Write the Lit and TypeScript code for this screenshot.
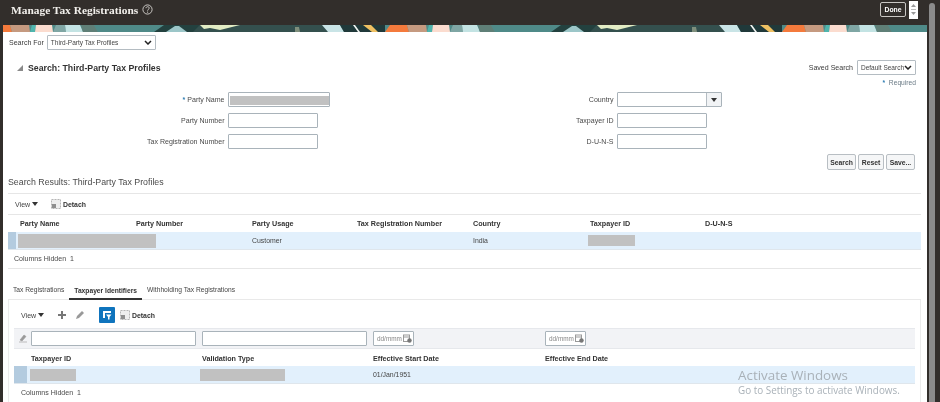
import { LitElement, html, css, svg } from "lit";
import { customElement } from "lit/decorators.js";

// one period of the banner artwork, x in px from the pattern start
const BANNER: [string, string][] = [
  ["#f47a3c", "0,7 5,0 22,0 24,7"],
  ["#c59a80", "24,7 22,0 41,0 42,7"],
  ["#4fb5ad", "42,7 44,0 48,0 47,7"],
  ["#fbdccf", "47,7 48,0 64,0 65,7"],
  ["#7fa6a4", "65,7 68,0 77,0 78,7"],
  ["#c3e3e3", "78,7 77,0 92,0 95,7"],
  ["#5f7f77", "95,7 93,0 106,0 110,7"],
  ["#4f8a88", "110,7 106,0 176,0 166,7"],
  ["#23413f", "166,7 176,0 214,0 214,7"],
  ["#9cc6c8", "178,7 187,1 191,1 199,7"],
  ["#34504e", "212,0 340,0 340,7 205,7"],
  ["#e2ecc4", "212,0 252,0 244,2 232,5 222,3 216,4"],
  ["#7f8f7c", "307,2 311,2 312,7 307,7"],
  ["#c9e4e6", "334,0 352,0 356,7 340,7"],
  ["#20393a", "352,0 397,0 397,7 356,7"],
  ["#f3f6f4", "365,0 367,0 372,7 370,7"],
  ["#efc062", "375,0 383,0 390,7 384,7"],
];

@customElement("app-root")
export class AppRoot extends LitElement {
  static styles = css`
    :host {
      display: block;
      width: 940px;
      height: 402px;
      overflow: hidden;
      font-family: "Liberation Sans", Arial, sans-serif;
      font-size: 7.05px;
      color: #3a3a3a;
    }
    .frame {
      position: relative;
      display: flex;
      height: 402px;
      background: #322e2b;
      filter: blur(0.45px);
    }
    .edge {
      width: 3px;
      flex: none;
    }
    .main {
      width: 924px;
      flex: none;
      background: #fff;
      overflow: hidden;
    }
    .rail {
      width: 13px;
      flex: none;
      padding: 3px 5px 0 2px;
      box-sizing: border-box;
    }
    .thumb {
      height: 100%;
      background: #8b8b8b;
      border-radius: 3px 3px 0 0;
    }

    .titlebar {
      box-sizing: border-box;
      height: 25px;
      background: #322e2b;
      display: flex;
      align-items: center;
      padding: 0 9px 6px 8px;
      color: #f2f0ec;
    }
    .titlebar h1 {
      margin: 0;
      font: bold 11.4px "Liberation Serif", Georgia, serif;
    }
    .help {
      margin-left: 4px;
    }
    .done {
      margin-left: auto;
      width: 26px;
      height: 15px;
      box-sizing: border-box;
      border: 1px solid #c9c7c4;
      border-radius: 2px;
      color: #fff;
      font-size: 6.8px;
      font-weight: bold;
      display: flex;
      align-items: center;
      justify-content: center;
      margin-right: 3px;
    }
    .spin {
      width: 9px;
      height: 18px;
      background: #fff;
      display: flex;
      flex-direction: column;
      align-items: center;
      justify-content: center;
      gap: 2px;
    }
    .banner {
      display: block;
      width: 924px;
      height: 7px;
    }

    .content {
      padding: 3px 6px 0 5px;
    }
    .search-for {
      height: 15px;
      display: flex;
      align-items: center;
      gap: 3px;
      padding-left: 1px;
    }
    .select {
      box-sizing: border-box;
      height: 15px;
      border: 1px solid #b4bcc2;
      border-radius: 1px;
      display: flex;
      align-items: center;
      justify-content: space-between;
      padding: 0 3px;
      color: #444;
      font-size: 6.5px;
      white-space: nowrap;
    }
    .select.for {
      width: 109px;
    }
    .select.saved {
      width: 59px;
    }
    .head-row {
      display: flex;
      align-items: center;
      justify-content: space-between;
      height: 15px;
      margin-top: 10px;
      padding: 0 5px 0 9px;
    }
    .head-row h2 {
      margin: 0 0 0 5px;
      font-size: 8.75px;
      font-weight: bold;
      color: #333;
    }
    .disclose {
      display: flex;
      align-items: center;
    }
    .saved-wrap {
      display: flex;
      align-items: center;
      gap: 4px;
    }
    .required {
      text-align: right;
      padding-right: 5px;
      height: 11px;
      margin-top: 4px;
      color: #6a7a85;
      font-size: 6.7px;
    }
    .required b,
    .star {
      color: #2a7ab0;
      font-weight: bold;
    }
    .form {
      display: grid;
      grid-template-columns: 220px 102px 287px 105px;
      row-gap: 6px;
      margin-top: 2px;
    }
    .label {
      height: 15px;
      line-height: 15px;
      text-align: right;
      padding-right: 3.5px;
      box-sizing: border-box;
      white-space: nowrap;
      color: #4a4a4a;
    }
    .input {
      box-sizing: border-box;
      height: 15px;
      width: 90px;
      border: 1px solid #a9b3ba;
      border-radius: 1px;
      background: #fff;
    }
    .input.party {
      width: 102px;
      padding: 3px 0 1px 1px;
    }
    .input.party i {
      display: block;
      height: 100%;
      background: #c1c1c1;
    }
    .input.combo {
      width: 105px;
      display: flex;
      justify-content: flex-end;
    }
    .combo span {
      width: 14px;
      border-left: 1px solid #b4bcc2;
      background: #f1f3f5;
      display: flex;
      align-items: center;
      justify-content: center;
    }
    .buttons {
      display: flex;
      justify-content: flex-end;
      gap: 2px;
      padding-right: 6px;
      margin-top: 5px;
      height: 16px;
    }
    .btn {
      box-sizing: border-box;
      height: 16px;
      border: 1px solid #b8bec3;
      border-radius: 2px;
      background: #f5f6f7;
      font-size: 6.8px;
      font-weight: bold;
      color: #333;
      display: flex;
      align-items: center;
      justify-content: center;
    }
    .results-title {
      height: 23px;
      line-height: 24px;
      font-size: 8.8px;
      color: #4a4a4a;
      border-bottom: 1px solid #e6e6e6;
    }
    .toolbar {
      height: 20px;
      display: flex;
      align-items: center;
      padding-left: 7px;
    }
    .view {
      display: flex;
      align-items: center;
      gap: 2px;
      width: 36px;
      color: #444;
    }
    .detach {
      display: flex;
      align-items: center;
      gap: 2px;
      font-size: 6.9px;
      font-weight: bold;
      color: #333;
    }
    .row {
      display: grid;
      align-items: center;
    }
    .results .row {
      grid-template-columns: 12px 116px 116px 105px 116px 117px 115px 1fr;
    }
    .hdr {
      height: 17px;
      border-top: 1px solid #e6e6e6;
      font-size: 7.2px;
      font-weight: bold;
      color: #333;
    }
    .data {
      height: 17px;
      background: #e2f0fc;
      border-bottom: 1px solid #dfe6ec;
      color: #444;
      font-size: 6.9px;
    }
    .mark {
      align-self: stretch;
      width: 8px;
      background: #b3cbdf;
    }
    .cell {
      position: relative;
      white-space: nowrap;
    }
    .redact {
      display: block;
      background: #c1c1c1;
    }
    .hidden {
      height: 18px;
      line-height: 17px;
      padding-left: 6px;
      color: #4a4a4a;
    }
    .results {
      border-bottom: 1px solid #e6e6e6;
    }
    .tabs {
      display: flex;
      height: 30px;
      align-items: flex-end;
      border-bottom: 1px solid #e9e9e9;
    }
    .tab {
      height: 17px;
      line-height: 16px;
      padding: 0 5px;
      color: #444;
      box-sizing: border-box;
      font-size: 6.7px;
    }
    .tab.on {
      font-weight: bold;
      color: #333;
      border-bottom: 2px solid #333;
      margin-bottom: -1px;
    }
    .detail {
      border-left: 1px solid #ececec;
      border-right: 1px solid #ececec;
      padding: 0 5px;
    }
    .detail-bar {
      box-sizing: border-box;
      height: 28px;
      display: flex;
      align-items: center;
      padding: 2px 0 0 7px;
    }
    .tool {
      display: flex;
      align-items: center;
      justify-content: center;
    }
    .qbe-btn {
      width: 16px;
      height: 16px;
      background: #0f74bd;
      border-radius: 1px;
      margin: 0 5px 0 14px;
      display: flex;
      align-items: center;
      justify-content: center;
    }
    .detail .row {
      grid-template-columns: 17px 171px 171px 172px 1fr;
    }
    .filter {
      height: 21px;
      background: #f2f3f6;
      border-top: 1px solid #e6e8ec;
      border-bottom: 1px solid #e6e8ec;
      box-sizing: border-box;
    }
    .filter .input {
      width: 165px;
      height: 15px;
    }
    .date {
      box-sizing: border-box;
      width: 41px;
      height: 15px;
      border: 1px solid #a9b3ba;
      border-radius: 1px;
      background: #fff;
      display: flex;
      align-items: center;
      justify-content: space-between;
      padding: 0 1px 0 3px;
      color: #888;
      font-size: 6.4px;
    }
    .detail .hdr {
      border-top: 0;
      box-sizing: border-box;
      padding-top: 2px;
    }
    .detail .hidden {
      padding-left: 7px;
    }
    .watermark {
      position: absolute;
      left: 738px;
      top: 366px;
      font-family: "Open Sans", "Noto Sans", sans-serif;
      color: #a9b1b8;
      pointer-events: none;
      white-space: nowrap;
    }
    .watermark div:first-child {
      font-size: 13.4px;
      line-height: 18px;
    }
    .watermark div:last-child {
      font-size: 9.9px;
      line-height: 12px;
    }
  `;

  private caretDown() {
    return html`<svg width="6" height="4" viewBox="0 0 6 4"><path d="M0 0h6L3 4z" fill="#333" /></svg>`;
  }

  private chevron() {
    return html`<svg width="8" height="5" viewBox="0 0 8 5"><path d="M1 1l3 3 3-3" fill="none" stroke="#222" stroke-width="1.5" /></svg>`;
  }

  private detach() {
    return html`<div class="detach">
      <svg width="10" height="10" viewBox="0 0 10 10">
        <rect x="0.5" y="0.5" width="9" height="9" fill="#eee" stroke="#b5b5b5" stroke-dasharray="2 1" />
        <rect x="1" y="5" width="4" height="4" fill="#8f8f8f" />
      </svg>
      Detach
    </div>`;
  }

  private view() {
    return html`<div class="view">View ${this.caretDown()}</div>`;
  }

  private dateField() {
    return html`<div class="date">
      dd/mmm
      <svg width="9" height="9" viewBox="0 0 9 9">
        <rect x="0.5" y="1" width="6" height="6.5" fill="#fff" stroke="#999" />
        <path d="M1 3h5" stroke="#999" />
        <circle cx="6.5" cy="6.5" r="2.2" fill="#777" />
      </svg>
    </div>`;
  }

  private banner() {
    const shapes = BANNER.map(([fill, pts]) => svg`<polygon fill=${fill} points=${pts} />`);
    return html`<svg class="banner" viewBox="0 0 924 7" preserveAspectRatio="none">
      <defs>
        <pattern id="art" x="-15" y="0" width="397" height="7" patternUnits="userSpaceOnUse">
          <rect width="397" height="7" fill="#4f8a88" />
          ${shapes}
        </pattern>
      </defs>
      <rect width="924" height="7" fill="url(#art)" />
    </svg>`;
  }

  render() {
    return html`<div class="frame">
      <div class="edge"></div>
      <div class="main">
        <div class="titlebar">
          <h1>Manage Tax Registrations</h1>
          <svg class="help" width="11" height="11" viewBox="0 0 11 11">
            <circle cx="5.5" cy="5.5" r="4.6" fill="none" stroke="#d8d6d2" stroke-width="0.9" />
            <path d="M4 4.2c0-2 3.2-2 3.2-.1 0 1.2-1.6 1.3-1.6 2.6" fill="none" stroke="#d8d6d2" stroke-width="0.9" />
            <circle cx="5.6" cy="8.1" r="0.6" fill="#d8d6d2" />
          </svg>
          <div class="done">Done</div>
          <div class="spin">
            <svg width="5" height="3" viewBox="0 0 5 3"><path d="M0 3h5L2.5 0z" fill="#9a9a9a" /></svg>
            <svg width="5" height="1" viewBox="0 0 5 1"><path d="M0 .5h5" stroke="#bbb" /></svg>
            <svg width="5" height="3" viewBox="0 0 5 3"><path d="M0 0h5L2.5 3z" fill="#9a9a9a" /></svg>
          </div>
        </div>
        ${this.banner()}
        <div class="content">
          <div class="search-for">
            <span>Search For</span>
            <div class="select for">Third-Party Tax Profiles ${this.chevron()}</div>
          </div>

          <div class="head-row">
            <div class="disclose">
              <svg width="6" height="6" viewBox="0 0 6 6"><path d="M6 0v6H0z" fill="#8a8a8a" /></svg>
              <h2>Search: Third-Party Tax Profiles</h2>
            </div>
            <div class="saved-wrap">
              <span>Saved Search</span>
              <div class="select saved">Default Search ${this.chevron()}</div>
            </div>
          </div>
          <div class="required"><b>*</b>&nbsp; Required</div>

          <div class="form">
            <div class="label"><span class="star">*</span> Party Name</div>
            <div class="input party"><i></i></div>
            <div class="label">Country</div>
            <div class="input combo"><span>${this.caretDown()}</span></div>

            <div class="label">Party Number</div>
            <div class="input"></div>
            <div class="label">Taxpayer ID</div>
            <div class="input"></div>

            <div class="label">Tax Registration Number</div>
            <div class="input"></div>
            <div class="label">D-U-N-S</div>
            <div class="input"></div>
          </div>

          <div class="buttons">
            <div class="btn" style="width:29px">Search</div>
            <div class="btn" style="width:26px">Reset</div>
            <div class="btn" style="width:29px">Save...</div>
          </div>

          <div class="results-title">Search Results: Third-Party Tax Profiles</div>
          <div class="results">
            <div class="toolbar">
              ${this.view()} ${this.detach()}
            </div>
            <div class="row hdr">
              <span></span><span>Party Name</span><span>Party Number</span><span>Party Usage</span>
              <span>Tax Registration Number</span><span>Country</span><span>Taxpayer ID</span><span>D-U-N-S</span>
            </div>
            <div class="row data">
              <span class="mark"></span>
              <span class="cell"><i class="redact" style="width:138px;height:14px;margin-left:-2px"></i></span>
              <span></span>
              <span>Customer</span>
              <span></span>
              <span>India</span>
              <span class="cell"><i class="redact" style="width:47px;height:11px;margin-left:-2px"></i></span>
              <span></span>
            </div>
            <div class="hidden">Columns Hidden &nbsp;1</div>
          </div>

          <div class="tabs">
            <div class="tab">Tax Registrations</div>
            <div class="tab on">Taxpayer Identifiers</div>
            <div class="tab">Withholding Tax Registrations</div>
          </div>

          <div class="detail">
            <div class="detail-bar">
              ${this.view()}
              <div class="tool">
                <svg width="10" height="10" viewBox="0 0 10 10"><path d="M5 1v8M1 5h8" stroke="#777" stroke-width="2" /></svg>
              </div>
              <div class="tool" style="margin-left:8px">
                <svg width="10" height="10" viewBox="0 0 10 10"><path d="M1 9l1-3 5-5 2 2-5 5z" fill="#999" /></svg>
              </div>
              <div class="qbe-btn">
                <svg width="10" height="10" viewBox="0 0 10 10">
                  <path d="M1 1h8v2H3v5H1z" fill="#fff" />
                  <path d="M4 4.5h5.5L7.5 7v2.5h-1.500V7z" fill="#fff" />
                </svg>
              </div>
              ${this.detach()}
            </div>
            <div class="row filter">
              <span class="tool">
                <svg width="8" height="9" viewBox="0 0 8 9"><path d="M1 6l4-5 2 1.500-4 4.500zM0 8h8" fill="#999" stroke="#999" stroke-width="0.6" /></svg>
              </span>
              <div class="input"></div>
              <div class="input"></div>
              ${this.dateField()}
              ${this.dateField()}
            </div>
            <div class="row hdr">
              <span></span><span>Taxpayer ID</span><span>Validation Type</span>
              <span>Effective Start Date</span><span>Effective End Date</span>
            </div>
            <div class="row data">
              <span class="mark" style="width:13px"></span>
              <span class="cell"><i class="redact" style="width:46px;height:12px;margin-left:-1px"></i></span>
              <span class="cell"><i class="redact" style="width:85px;height:12px;margin-left:-2px"></i></span>
              <span>01/Jan/1951</span>
              <span></span>
            </div>
            <div class="hidden">Columns Hidden &nbsp;1</div>
          </div>
        </div>
      </div>
      <div class="rail"><div class="thumb"></div></div>
      <div class="watermark">
        <div>Activate Windows</div>
        <div>Go to Settings to activate Windows.</div>
      </div>
    </div>`;
  }
}
